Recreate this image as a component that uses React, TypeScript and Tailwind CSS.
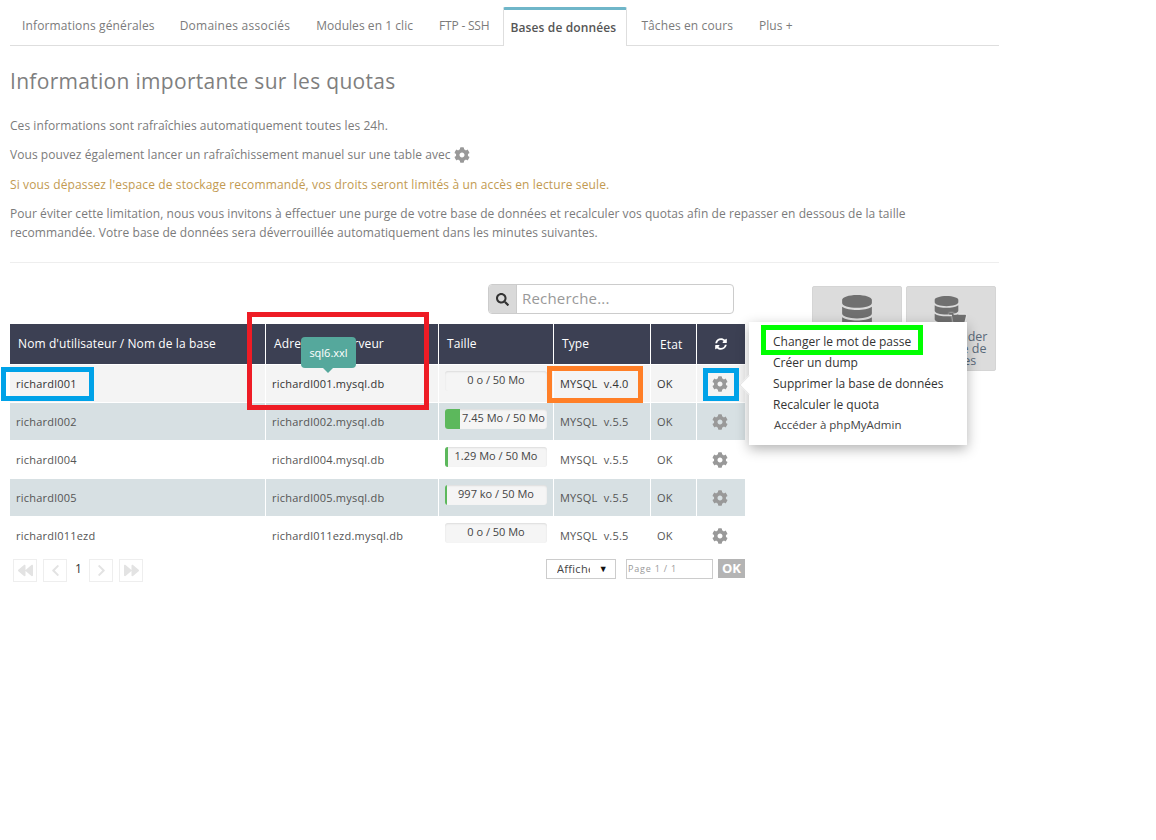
import React from 'react';
import { FaCog, FaSearch, FaSyncAlt, FaDatabase, FaShoppingCart, FaBackward, FaForward, FaChevronLeft, FaChevronRight } from 'react-icons/fa';

const tabs = [
  { label: 'Informations générales', cls: 'mr-[25px] tracking-[0.13px]' },
  { label: 'Domaines associés', cls: 'mr-[26px] tracking-[0.25px]' },
  { label: 'Modules en 1 clic', cls: 'mr-[26px] tracking-[0.05px]' },
  { label: 'FTP - SSH', cls: 'mr-0 tracking-[-0.2px]' },
  { label: 'Bases de données', cls: '' },
  { label: 'Tâches en cours', cls: 'mr-[26px] tracking-[0.1px]' },
  { label: 'Plus +', cls: 'tracking-[0.05px]' },
];

type Row = { user: string; version: string; size: string; bar: number };

const rows: Row[] = [
  { user: 'richardl001', version: 'v.4.0', size: '0 o / 50 Mo', bar: 0 },
  { user: 'richardl002', version: 'v.5.5', size: '7.45 Mo / 50 Mo', bar: 15 },
  { user: 'richardl004', version: 'v.5.5', size: '1.29 Mo / 50 Mo', bar: 3 },
  { user: 'richardl005', version: 'v.5.5', size: '997 ko / 50 Mo', bar: 2 },
  { user: 'richardl011ezd', version: 'v.5.5', size: '0 o / 50 Mo', bar: 0 },
];

const rowBg = ['bg-[#f4f4f4]', 'bg-[#d7e0e3]', 'bg-white', 'bg-[#d7e0e3]', 'bg-white'];
const menu = ['Changer le mot de passe', 'Créer un dump', 'Supprimer la base de données', 'Recalculer le quota'];

const App: React.FC = () => {
  return (
    <div className="relative w-[1156px] h-[840px] bg-white overflow-hidden text-[12px] text-[#7b7b7b]" style={{ fontFamily: '"Open Sans", sans-serif' }}>
      <div className="ml-[10px] w-[989px]">
        {/* tabs */}
        <div className="flex h-[46px] border-b border-[#dedede] pl-[12px] pt-[7px]">
          {tabs.map((t) =>
            t.label === 'Bases de données' ? (
              <div key={t.label} className="-mb-px ml-[14px] mr-[14px] h-[39px] w-[124px] shrink-0 rounded-t-[2px] border-x border-[#dedede] border-t-[3px] border-t-[#6fb6c9] bg-white pr-[4px] text-center text-[12px] font-semibold leading-[35px] tracking-[0.13px] text-[#555]">
                {t.label}
              </div>
            ) : (
              <div key={t.label} className={`${t.cls} whitespace-nowrap text-[12px] leading-[38px] text-[#7b7b7b]`}>{t.label}</div>
            )
          )}
        </div>

        <h1 className="mt-[20px] text-[21px] leading-[30px] tracking-[0.3px] text-[#7f7f7f]">Information importante sur les quotas</h1>

        <p className="mt-[21px] leading-[18px] tracking-[0.06px]">Ces informations sont rafraîchies automatiquement toutes les 24h.</p>
        <p className="mt-[11px] flex items-center leading-[18px] tracking-[0.06px]">
          Vous pouvez également lancer un rafraîchissement manuel sur une table avec
          <FaCog className="ml-[3px] text-[16px] text-[#999]" />
        </p>
        <p className="mt-[12px] leading-[18px] tracking-[0.13px] text-[#c29a51]">Si vous dépassez l'espace de stockage recommandé, vos droits seront limités à un accès en lecture seule.</p>
        <p className="mt-[10px] max-w-[960px] leading-[19px] tracking-[0.06px]">
          Pour éviter cette limitation, nous vous invitons à effectuer une purge de votre base de données et recalculer vos quotas afin de repasser en dessous de la taille recommandée. Votre base de données sera déverrouillée automatiquement dans les minutes suivantes.
        </p>
        <div className="mt-[20px] border-t border-[#eeeeee]" />

        <div className="mt-[23px] flex">
          <div className="w-[735px]">
            {/* search */}
            <div className="-mt-[2px] ml-[478px] flex h-[30px] w-[246px] rounded-[4px] border border-[#cccccc]">
              <div className="flex w-[27px] items-center justify-center rounded-l-[3px] bg-[#d9d9d9] text-[13px] text-[#333]"><FaSearch /></div>
              <div className="flex-1 border-l border-[#ccc] pl-[5px] text-[15px] leading-[27px] tracking-[0.2px] text-[#999]">Recherche...</div>
            </div>

            {/* table */}
            <div className="mt-[10px] flex h-[41px] border-b border-white bg-[#3c4053] text-[12px] tracking-[0.1px] text-white">
              <div className="w-[256px] border-r border-white pl-[8px] leading-[39px]">Nom d'utilisateur / Nom de la base</div>
              <div className="w-[173px] border-r border-white pl-[8px] leading-[39px]">Adresse du serveur</div>
              <div className="w-[115px] border-r border-white pl-[8px] leading-[39px]">Taille</div>
              <div className="w-[97px] border-r border-white pl-[8px] leading-[39px]">Type</div>
              <div className="w-[46px] border-r border-white pl-[9px] leading-[41px]">Etat</div>
              <div className="flex flex-1 items-center justify-center text-[12px]"><FaSyncAlt /></div>
            </div>
            {rows.map((r, i) => (
              <div key={r.user} className={`flex h-[38px] border-b border-white ${rowBg[i]} text-[11px] tracking-[0.22px] ${i === 0 ? 'text-[#333]' : 'text-[#555]'}`}>
                <div className="flex w-[256px] items-center border-r border-white pl-[6px] pt-[1px]">{r.user}</div>
                <div className="flex w-[173px] items-center border-r border-white pl-[6px] pt-[1px]">{r.user}.mysql.db</div>
                <div className="w-[115px] border-r border-white pl-[6px] pt-[6px]">
                  <div className="relative h-[20px] w-[102px] overflow-hidden rounded-[3px] bg-[#f5f5f5] tracking-normal shadow-[inset_0_1px_2px_rgba(0,0,0,0.1)]">
                    <div className="absolute inset-y-0 left-0 bg-[#5cb85c]" style={{ width: `${r.bar}%` }} />
                    <div className="absolute inset-0 whitespace-nowrap text-center leading-[17px] text-[#444]" style={{ paddingLeft: r.bar > 10 ? 15 : 0 }}>{r.size}</div>
                  </div>
                </div>
                <div className="flex w-[97px] items-center whitespace-pre border-r border-white pl-[6px] pt-[1px]">{`MYSQL  ${r.version}`}</div>
                <div className="flex w-[46px] items-center border-r border-white pl-[6px] pt-[1px]">OK</div>
                <div className="flex flex-1 items-center justify-center pr-[2px] text-[16px] text-[#999]"><FaCog /></div>
              </div>
            ))}

            {/* pagination */}
            <div className="mt-[4px] flex items-start">
              <div className="ml-[3px] flex w-[130px] items-center text-[15px] text-[#e3e3e3]">
                <div className="flex h-[23px] w-[24px] items-center justify-center border border-[#eeeeee]"><FaBackward /></div>
                <div className="ml-[6px] flex h-[23px] w-[24px] items-center justify-center border border-[#eeeeee] text-[13px]"><FaChevronLeft /></div>
                <div className="ml-[8px] -mt-[3px] w-[6px] text-[12px] text-[#333]">1</div>
                <div className="ml-[8px] flex h-[23px] w-[24px] items-center justify-center border border-[#eeeeee] text-[13px]"><FaChevronRight /></div>
                <div className="ml-[6px] flex h-[23px] w-[24px] items-center justify-center border border-[#eeeeee]"><FaForward /></div>
              </div>
              <div className="ml-[403px] flex h-[20px] w-[70px] items-center justify-between border border-[#cccccc] pl-[10px] pr-[7px] text-[11px] tracking-[0.3px] text-[#444]">
                <span className="w-[33px] overflow-hidden whitespace-nowrap">Afficher</span>
                <span className="text-[9px] text-[#111]">▼</span>
              </div>
              <div className="ml-[10px] h-[20px] w-[87px] border border-[#cccccc] pl-[1px] text-[9px] leading-[18px] tracking-[0.8px] text-[#999]">Page 1 / 1</div>
              <div className="ml-[5px] h-[19px] w-[27px] bg-[#b4b4b4] text-center text-[13px] font-bold leading-[19px] text-white">OK</div>
            </div>
          </div>

          {/* side buttons */}
          <div className="ml-[67px] flex gap-[4px]">
            <div className="flex h-[85px] w-[90px] justify-center rounded-[2px] border border-[#d5d5d5] bg-[#dcdcdc] pt-[8px] text-[34px] text-[#707070]"><FaDatabase /></div>
            <div className="h-[85px] w-[90px] rounded-[2px] border border-[#d5d5d5] bg-[#dcdcdc] text-center text-[#666]">
              <div className="relative ml-[26px] mt-[9px] h-[27px] w-[24px] text-[27px] text-[#707070]">
                <FaDatabase />
                <FaShoppingCart className="absolute left-[16px] top-[16px] text-[17px] drop-shadow-[0_0_1px_#ffffff]" />
              </div>
              <div className="mt-[8px] text-[12.5px] leading-[12px] text-[#5a6a7a]">Commander une base de données</div>
            </div>
          </div>
        </div>
      </div>

      {/* tooltip */}
      <div className="absolute left-[301px] top-[337px] flex h-[31px] w-[55px] items-center justify-center rounded-[4px] bg-[#55a89c] pt-[1px] text-[11px] text-white">
        sql6.xxl
        <div className="absolute -bottom-[5px] left-[22px] h-0 w-0 border-x-[5px] border-t-[5px] border-x-transparent border-t-[#55a89c]" />
      </div>

      {/* action menu */}
      <div className="absolute left-[749px] top-[322px] h-[123px] w-[218px] bg-white pl-[24px] pt-[10px] text-[12px] text-[#333] shadow-[0_4px_12px_rgba(0,0,0,0.3)]">
        <div className="absolute -left-[7px] top-[56px] h-[14px] w-[14px] rotate-45 border-b border-l border-[#e5e5e5] bg-white" />
        {menu.map((m) => (
          <div key={m} className="relative h-[21px] leading-[20px]">{m}</div>
        ))}
        <div className="ml-[1px] h-[20px] text-[11.5px] leading-[18px] text-[#444]">Accéder à phpMyAdmin</div>
      </div>

      {/* annotations */}
      <div className="absolute left-[247px] top-[312px] h-[98px] w-[182px] border-[5px] border-[#ee1c25]" />
      <div className="absolute left-[1px] top-[367px] h-[34px] w-[93px] border-[5px] border-[#00a2e8]" />
      <div className="absolute left-[547px] top-[366px] h-[37px] w-[96px] border-[5px] border-[#ff7f27]" />
      <div className="absolute left-[703px] top-[368px] h-[33px] w-[36px] border-[5px] border-[#00a2e8]" />
      <div className="absolute left-[761px] top-[325px] h-[30px] w-[162px] border-[5px] border-[#00ff00]" />
    </div>
  );
};

export default App;
